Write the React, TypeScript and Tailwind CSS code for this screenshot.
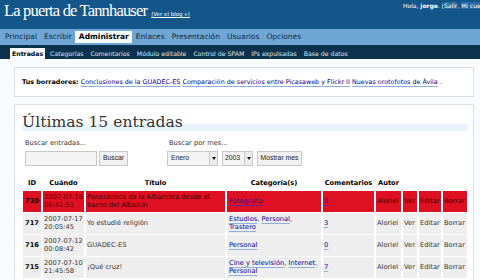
import React from "react";

type Row = {
  id: string;
  date: string;
  time: string;
  title: string;
  cats: string[];
  comments: string;
  red?: boolean;
};

const rows: Row[] = [
  { id: "720", date: "2007-07-19", time: "06:41:51", title: "Panorámica de la Alhambra desde el barrio del Albaicín", cats: ["Fotografía"], comments: "0", red: true },
  { id: "717", date: "2007-07-17", time: "20:05:45", title: "Yo estudié religión", cats: ["Estudios", "Personal", "Trastero"], comments: "3" },
  { id: "716", date: "2007-07-12", time: "00:08:42", title: "GUADEC-ES", cats: ["Personal"], comments: "0" },
  { id: "715", date: "2007-07-10", time: "21:45:58", title: "¡Qué cruz!", cats: ["Cine y televisión", "Internet", "Personal"], comments: "7" },
];

const nav = ["Principal", "Escribir", "Administrar", "Enlaces", "Presentación", "Usuarios", "Opciones"];
const sub = ["Entradas", "Categorías", "Comentarios", "Módulo editable", "Control de SPAM", "IPs expulsadas", "Base de datos"];

function Arrow() {
  return (
    <span className="flex-none w-[8px] h-full border-l border-[#c8c8c8] bg-[#ececec] flex items-center justify-center">
      <svg width="4" height="3" viewBox="0 0 4 3">
        <path d="M0 0H4L2 3Z" fill="#111" />
      </svg>
    </span>
  );
}

export default function App() {
  return (
    <div className="w-[480px] h-[280px] overflow-hidden bg-[#f9fcfe] font-['DejaVu_Sans',sans-serif] text-[#333]">
      {/* header */}
      <div className="h-[29px] bg-[#14568a] flex overflow-hidden">
        <div className="w-[403px] flex-none pl-[4px] pt-[3px] leading-[16.5px] whitespace-nowrap text-white">
          <span className="font-['Liberation_Serif',serif] text-[16.5px] tracking-[-0.05em]">La puerta de Tannhauser</span>
          <span className="ml-[4px] text-[5.5px] underline">(Ver el blog »)</span>
        </div>
        <div className="pt-[1.5px] text-[6px] leading-[7px] text-white whitespace-nowrap">
          Hola, <b>jorge</b>. [<span className="bg-[#2a6aa0]">Salir</span>, <span className="bg-[#2a6aa0]">Mi cuenta</span>]
        </div>
      </div>

      {/* main menu */}
      <div className="h-[16px] bg-[#70a6d4] flex items-start pt-[2px] pl-[1.5px] text-[7.5px] leading-[12px] text-[#0e2a44] whitespace-nowrap">
        {nav.map((n) => (
          <span key={n} className={n === "Administrar" ? "px-[3.5px] bg-[#f7fafc] font-bold text-black" : "px-[3.5px]"}>
            {n}
          </span>
        ))}
      </div>

      {/* submenu */}
      <div className="h-[14px] bg-[#0d324f] flex items-start pt-[3px] pl-[10px] gap-[3px] text-[6.2px] leading-[11px] text-[#dfe8f0] whitespace-nowrap">
        {sub.map((n) => (
          <span key={n} className={n === "Entradas" ? "px-[2px] bg-[#f9fcfe] font-bold text-black" : "px-[2px]"}>
            {n}
          </span>
        ))}
      </div>

      <div className="ml-[14px] w-[460px]">
        {/* drafts */}
        <div className="mt-[8px] h-[30px] border border-[#dcdcdc] bg-white pl-[7px] pt-[10px] text-[6.4px] leading-[9px] whitespace-nowrap">
          <b className="text-black">Tus borradores:</b>{" "}
          <span className="text-[#00019b] underline decoration-[#8fb0d8] underline-offset-[1.5px]">Conclusiones de la GUADEC-ES</span>{" "}
          <span className="text-[#00019b] underline decoration-[#8fb0d8] underline-offset-[1.5px]">Comparación de servicios entre Picasaweb y Flickr II</span>{" "}
          <span className="text-[#00019b] underline decoration-[#8fb0d8] underline-offset-[1.5px]">Nuevas orotofotos de Ávila</span> .
        </div>

        {/* main wrap */}
        <div className="mt-[7px] h-[200px] border border-[#dcdcdc] bg-white pl-[7px] pr-[5px] pt-[15px]">
          <h2 className="font-['DejaVu_Serif',serif] text-[15.6px] leading-[4px] text-[#333] border-b-[7.5px] border-[#e8f3fd] whitespace-nowrap">
            Últimas 15 entradas
          </h2>

          {/* search forms */}
          <div className="flex mt-[8.5px]">
            <div className="w-[145px] flex-none pl-[3px]">
              <div className="text-[6.7px] leading-[7px] whitespace-nowrap">Buscar entradas...</div>
              <div className="flex mt-[4px] gap-[2px]">
                <div className="w-[72px] h-[15px] border border-[#c8c8c8] bg-[#f4f4f4]" />
                <div className="w-[29px] h-[15px] border border-[#c8c8c8] bg-[#f0f0f0] flex items-center justify-center font-['Liberation_Sans',sans-serif] text-[6.8px] text-[#222]">
                  Buscar
                </div>
              </div>
            </div>
            <div>
              <div className="pl-[2px] text-[6.7px] leading-[7px] whitespace-nowrap">Buscar por mes...</div>
              <div className="flex mt-[4px] gap-[4px] font-['Liberation_Sans',sans-serif] text-[6.8px] text-[#222]">
                <div className="w-[51px] h-[15px] border border-[#c8c8c8] bg-[#f4f4f4] flex items-center">
                  <span className="flex-1 pl-[3px]">Enero</span>
                  <Arrow />
                </div>
                <div className="w-[31px] h-[15px] border border-[#c8c8c8] bg-[#f4f4f4] flex items-center">
                  <span className="flex-1 pl-[2px]">2003</span>
                  <Arrow />
                </div>
                <div className="w-[45px] h-[15px] border border-[#c8c8c8] bg-[#f0f0f0] flex items-center justify-center">
                  Mostrar mes
                </div>
              </div>
            </div>
          </div>

          {/* table */}
          <table className="mt-[10px] -ml-[1px] w-[448px] table-fixed border-separate border-spacing-x-[2px] border-spacing-y-[1px] text-[6.7px] leading-[8.5px]">
            <colgroup>
              <col className="w-[18px]" />
              <col className="w-[41px]" />
              <col className="w-[139px]" />
              <col className="w-[94px]" />
              <col className="w-[51px]" />
              <col className="w-[25px]" />
              <col className="w-[14px]" />
              <col className="w-[22px]" />
              <col className="w-[24px]" />
            </colgroup>
            <thead>
              <tr className="h-[13px] text-black font-bold">
                <th className="p-0 text-center">ID</th>
                <th className="p-0 text-center">Cuándo</th>
                <th className="p-0 text-center">Título</th>
                <th className="p-0 text-center">Categoría(s)</th>
                <th className="p-0 text-center whitespace-nowrap">Comentarios</th>
                <th className="p-0 text-center">Autor</th>
                <th className="p-0" colSpan={3}></th>
              </tr>
            </thead>
            <tbody>
              {rows.map((r) => {
                const bg = r.red ? "bg-[#df1022] text-[#3a0000]" : "bg-[#eeeeee] text-[#333]";
                const link = r.red
                  ? "text-[#3a0a90] underline decoration-[#5a2a9a] underline-offset-[1.5px]"
                  : "text-[#00019b] underline decoration-[#8fb0d8] underline-offset-[1.5px]";
                const plain = r.red ? "text-[#3a0a90]" : "text-[#00019b]";
                return (
                  <tr key={r.id} className="h-[21px]">
                    <td className={`${bg} p-0 text-center font-bold text-black align-middle`}>{r.id}</td>
                    <td className={`${bg} px-[1px] align-middle ${r.red ? "text-[#5a0008]" : ""}`}>
                      {r.date}
                      <br />
                      {r.time}
                    </td>
                    <td className={`${bg} px-[1px] align-middle`}>{r.title}</td>
                    <td className={`${bg} px-[2px] align-middle`}>
                      {r.cats.map((c, i) => (
                        <React.Fragment key={c}>
                          <span className={link}>{c}</span>
                          {i < r.cats.length - 1 ? ", " : ""}
                        </React.Fragment>
                      ))}
                    </td>
                    <td className={`${bg} px-[1px] align-middle`}>
                      <span className={link}>{r.comments}</span>
                    </td>
                    <td className={`${bg} px-[1px] align-middle`}>Aloriel</td>
                    <td className={`${bg} px-[1px] align-middle ${plain}`}>Ver</td>
                    <td className={`${bg} px-[1px] align-middle ${plain}`}>Editar</td>
                    <td className={`${bg} px-[1px] align-middle ${plain}`}>Borrar</td>
                  </tr>
                );
              })}
            </tbody>
          </table>
        </div>
      </div>
    </div>
  );
}
